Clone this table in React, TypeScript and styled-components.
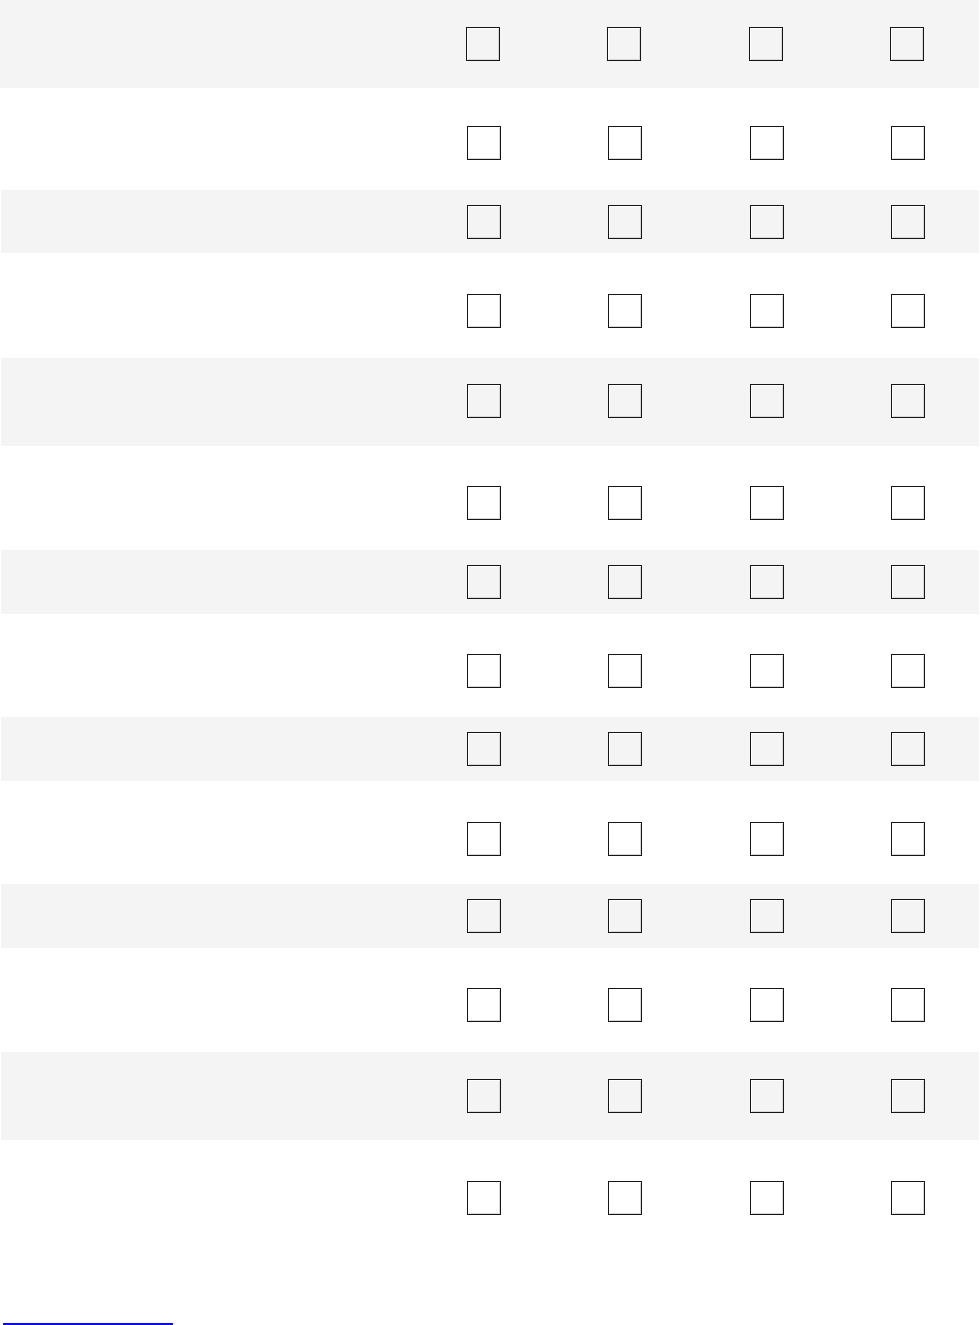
import React from "react";
import styled, { createGlobalStyle } from "styled-components";

const Global = createGlobalStyle`
  html, body { margin: 0; padding: 0; background: #ffffff; }
  body { font-family: "Liberation Sans", Arial, sans-serif; color: #111; }
`;

const Table = styled.div`
  width: 979px;
  display: flex;
  flex-direction: column;
`;

const Row = styled.div<{ $h: number; $shade: boolean; $inset: boolean }>`
  display: grid;
  grid-template-columns: 412px repeat(4, 141.5px);
  height: ${(p) => p.$h}px;
  background: ${(p) => (p.$shade ? "#f4f4f4" : "#ffffff")};
  margin-left: ${(p) => (p.$inset ? 1 : 0)}px;
`;

const LabelCell = styled.div`
  font-size: 14px;
`;

const Cell = styled.div`
  display: flex;
  justify-content: center;
  align-items: flex-start;
`;

const Box = styled.span<{ $top: number }>`
  display: block;
  width: 32px;
  height: 32px;
  margin-top: ${(p) => p.$top}px;
  border: 1.5px solid #151515;
  box-shadow: inset 1px 1px 0 #ffffff, inset -1px -1px 0 #d8d8d8;
`;

const Footer = styled.div`
  padding-top: 67px;
  padding-left: 3px;
  height: 69px;
  box-sizing: border-box;
`;

const FootLink = styled.a`
  display: block;
  width: 170px;
  height: 0;
  border-bottom: 2px solid #0a0aee;
  text-decoration: none;
`;

const rows: [number, number][] = [
  [88, 27],
  [102, 38],
  [63, 15],
  [105, 41],
  [88, 26],
  [104, 40],
  [64, 15],
  [103, 40],
  [64, 15],
  [103, 41],
  [64, 15],
  [104, 40],
  [88, 27],
  [116, 41],
];

export default function App() {
  return (
    <>
      <Global />
      <Table>
        {rows.map(([h, top], i) => (
          <Row key={i} $h={h} $shade={i % 2 === 0} $inset={i > 0}>
            <LabelCell />
            {[0, 1, 2, 3].map((c) => (
              <Cell key={c}>
                <Box $top={top} role="checkbox" aria-checked="false" />
              </Cell>
            ))}
          </Row>
        ))}
      </Table>
      <Footer>
        <FootLink href="#" aria-label="footnote" />
      </Footer>
    </>
  );
}
